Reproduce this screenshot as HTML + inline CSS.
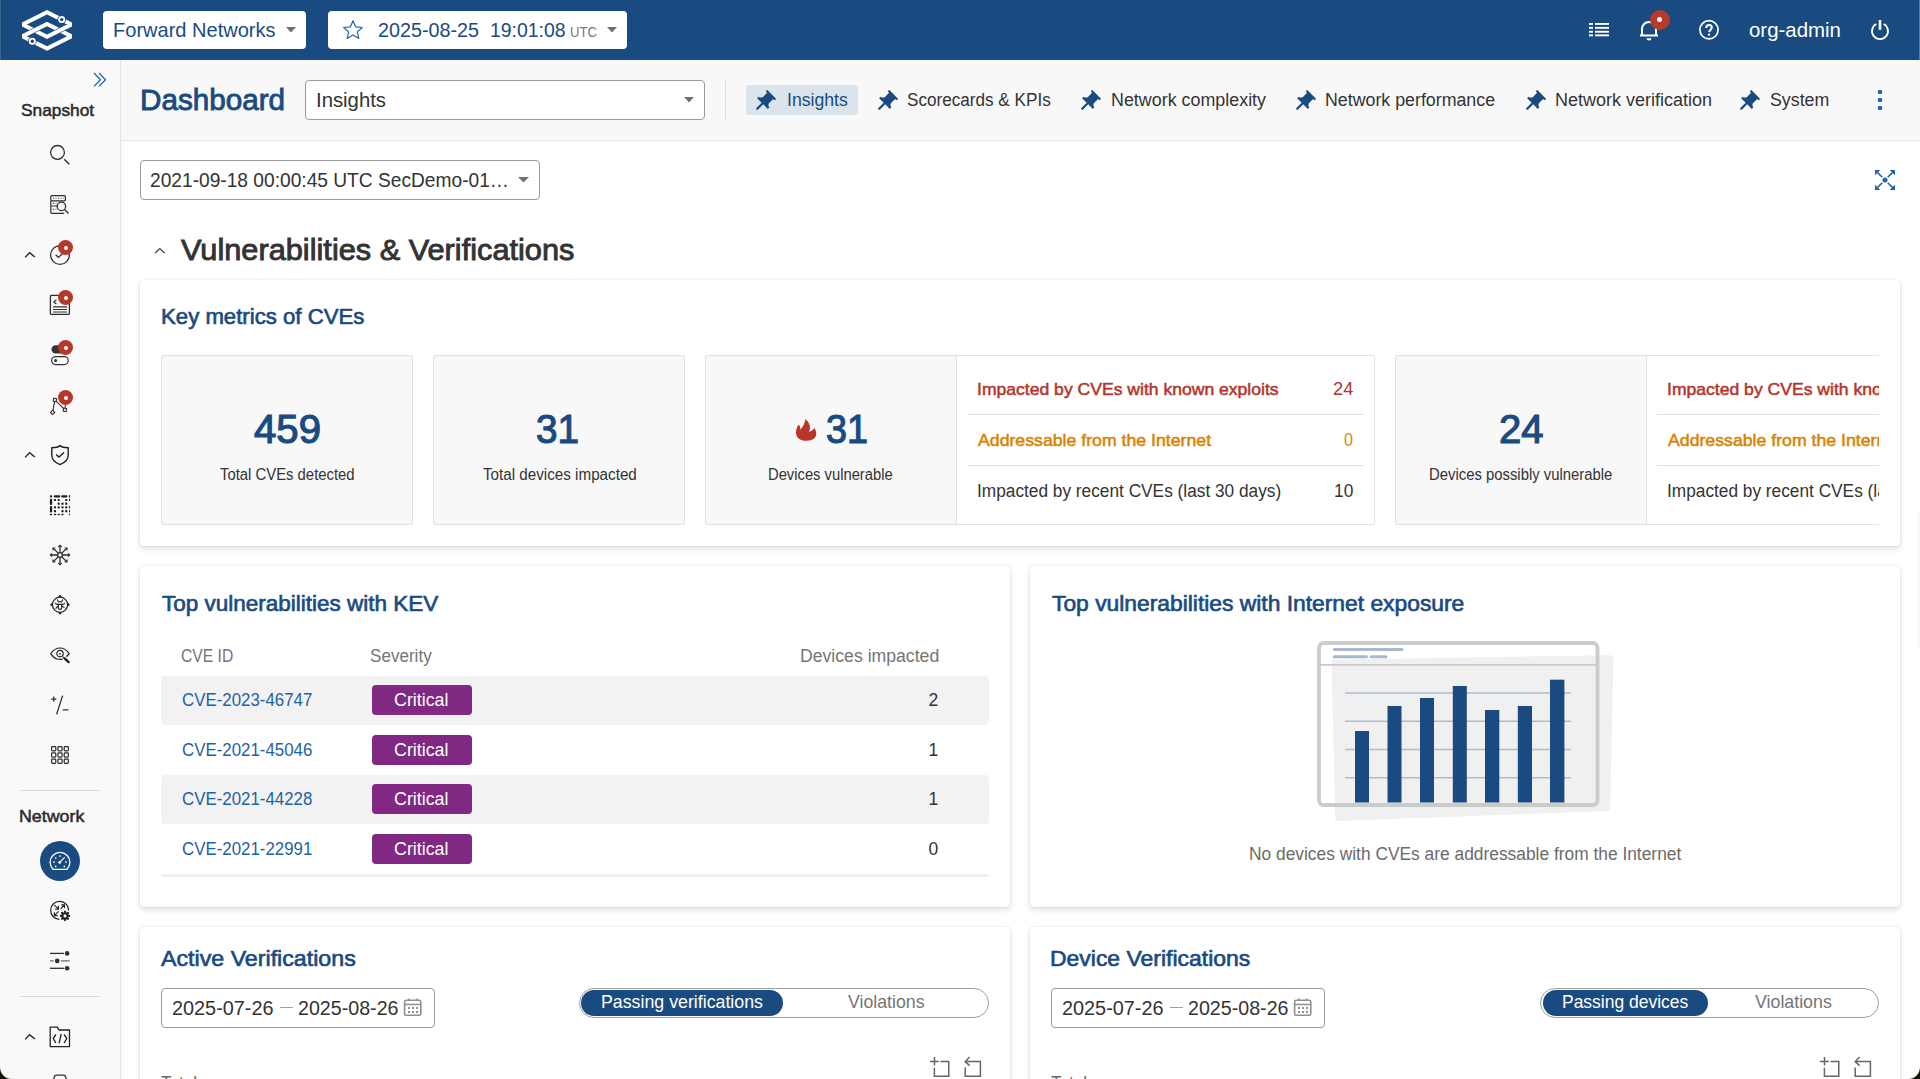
<!DOCTYPE html>
<html><head><meta charset="utf-8">
<style>
*{box-sizing:border-box;margin:0;padding:0}
html,body{width:1920px;height:1079px;overflow:hidden;background:#fff;font-family:"Liberation Sans",sans-serif}
.a{position:absolute}
.t{position:absolute;white-space:nowrap;line-height:1;transform-origin:0 0;font-family:"Liberation Sans",sans-serif}
svg{position:absolute;overflow:visible}
.card{position:absolute;background:#fff;border-radius:4px;box-shadow:0 0 1.5px rgba(0,0,0,.18),0 3px 6px rgba(0,0,0,.12)}
.mbox{position:absolute;background:#f8f8f8;border:1px solid #e2e2e2;border-radius:2px}
.badge{position:absolute;width:15px;height:15px;border-radius:50%;background:#b5382b}
.badge:after{content:"";position:absolute;left:5.5px;top:5.5px;width:4px;height:4px;border-radius:50%;background:#fff}
.row{position:absolute;left:161px;width:828px;height:49px;background:#f2f2f2;border-radius:4px}
.crit{position:absolute;left:372px;width:100px;height:30px;background:#812882;border-radius:4px}
</style></head><body>
<!-- top bar -->
<div class="a" style="left:0;top:0;width:1920px;height:60px;background:#1a4b80"></div>
<svg style="left:0;top:0" width="100" height="60" viewBox="0 0 100 60">
  <g fill="#fff" fill-rule="evenodd">
    <path d="M47 10 L72 22.5 L72 26.4 L47 38.9 L22 26.4 L22 22.5 Z M47 14.45 L67.05 24.5 L47 34.5 L26.95 24.5 Z"/>
    <path d="M47 21.8 L72 34.3 L72 38.2 L47 50.7 L22 38.2 L22 34.3 Z M47 26.25 L67.05 36.3 L47 46.3 L26.95 36.3 Z"/>
  </g>
  <!-- left crossing: ring2 over ring1 -->
  <g stroke="#1a4b80" stroke-width="1.3">
    <line x1="27" y1="31.8" x2="42" y2="24.3"/>
    <line x1="27" y1="36.25" x2="42" y2="28.75"/>
  </g>
  <path fill="#fff" d="M27 31.8 L42 24.3 L42 28.75 L27 36.25 Z"/>
  <!-- right crossing: ring1 over ring2 -->
  <g stroke="#1a4b80" stroke-width="1.3">
    <line x1="52" y1="32" x2="67" y2="24.5"/>
    <line x1="52" y1="36.4" x2="67" y2="28.9"/>
  </g>
  <path fill="#fff" d="M52 32 L67 24.5 L67 28.9 L52 36.4 Z"/>
  <circle cx="61.7" cy="19.6" r="4.3" fill="#1a4b80"/>
  <circle cx="61.7" cy="19.6" r="3.5" fill="#fff"/>
  <circle cx="61.7" cy="19.6" r="1.7" fill="#1a4b80"/>
  <circle cx="32.3" cy="41.2" r="4.3" fill="#1a4b80"/>
  <circle cx="32.3" cy="41.2" r="3.5" fill="#fff"/>
  <circle cx="32.3" cy="41.2" r="1.7" fill="#1a4b80"/>
</svg>
<div class="a" style="left:103px;top:11px;width:203px;height:38px;background:#fff;border-radius:4px"></div>
<svg style="left:286px;top:27px" width="10" height="6"><path d="M0 0 H10 L5 5.5 Z" fill="#707070"/></svg>
<div class="a" style="left:328px;top:11px;width:299px;height:38px;background:#fff;border-radius:4px"></div>
<svg style="left:342px;top:19px" width="22" height="22" viewBox="0 0 22 22"><path d="M11 1.8 L13.7 7.9 L20.3 8.5 L15.3 12.9 L16.8 19.4 L11 16 L5.2 19.4 L6.7 12.9 L1.7 8.5 L8.3 7.9 Z" fill="none" stroke="#1f64a8" stroke-width="1.2" stroke-linejoin="round"/></svg>
<svg style="left:607px;top:27px" width="10" height="6"><path d="M0 0 H10 L5 5.5 Z" fill="#707070"/></svg>
<!-- list icon -->
<svg style="left:1589px;top:22px" width="20" height="15" viewBox="0 0 20 15" fill="#fff">
  <rect x="0" y="1" width="4" height="1.9"/><rect x="6" y="1" width="14" height="1.9"/>
  <rect x="0" y="4.9" width="4" height="1.9"/><rect x="6" y="4.9" width="14" height="1.9"/>
  <rect x="0" y="8.8" width="4" height="1.9"/><rect x="6" y="8.8" width="14" height="1.9"/>
  <rect x="0" y="12.4" width="4" height="1.9"/><rect x="6" y="12.4" width="14" height="1.9"/>
</svg>
<!-- bell -->
<svg style="left:1638px;top:18px" width="22" height="24" viewBox="0 0 22 24">
  <path d="M4 17 V11 A7 7 0 0 1 18 11 V17" fill="none" stroke="#fff" stroke-width="2"/>
  <path d="M2 17.5 H20" stroke="#fff" stroke-width="2"/>
  <path d="M8.5 20.2 A2.5 2.2 0 0 0 13.5 20.2 Z" fill="#fff"/>
  <path d="M10 3.5 L12 3.5 L12 5 L10 5Z" fill="#fff"/>
</svg>
<div class="a" style="left:1650px;top:10px;width:20px;height:20px;border-radius:50%;background:#b83a2a"></div>
<div class="a" style="left:1657px;top:16.8px;width:5.4px;height:5.4px;border-radius:50%;background:#fff"></div>
<!-- help -->
<svg style="left:1698px;top:19px" width="22" height="22" viewBox="0 0 22 22">
  <circle cx="11" cy="10.8" r="9.1" fill="none" stroke="#fff" stroke-width="1.7"/>
  <path d="M8.2 8.9 C8.2 7 9.5 6.1 11.1 6.1 C12.7 6.1 13.8 7.1 13.8 8.5 C13.8 10.3 11.6 10.9 11.1 13" fill="none" stroke="#fff" stroke-width="2"/>
  <rect x="9.9" y="14.6" width="2.2" height="2" fill="#fff"/>
</svg>
<!-- power -->
<svg style="left:1870px;top:19px" width="20" height="22" viewBox="0 0 20 22">
  <rect x="8.7" y="1" width="2.6" height="9.8" fill="#fff"/>
  <path d="M6.3 5 A8 8 0 1 0 13.7 5" fill="none" stroke="#fff" stroke-width="1.8"/>
</svg>

<!-- sidebar -->
<div class="a" style="left:0;top:60px;width:121px;height:1019px;background:#f9f9f9;border-right:1px solid #e3e3e3"></div>
<div class="a" style="left:121px;top:60px;width:4px;height:1019px;background:linear-gradient(90deg,rgba(0,0,0,.035),rgba(0,0,0,0))"></div>
<!-- header band -->
<div class="a" style="left:121px;top:60px;width:1799px;height:81px;background:#f8f8f8;border-bottom:1px solid #e6e6e6"></div>

<!-- sidebar icons -->
<svg style="left:93px;top:72px" width="15" height="16" viewBox="0 0 15 16"><path d="M1 1 L7.5 7.7 L1 14.4 M6 1 L12.5 7.7 L6 14.4" fill="none" stroke="#1f66ad" stroke-width="1.3"/></svg>
<svg style="left:49px;top:144px" width="22" height="22" viewBox="0 0 22 22" fill="none" stroke="#2e2e2e" stroke-width="1.3"><circle cx="8.5" cy="8.4" r="6.9"/><path d="M15.2 15.2 L20.2 20.2" stroke-width="1.5"/></svg>
<svg style="left:49px;top:194px" width="22" height="22" viewBox="0 0 22 22" fill="none" stroke="#2e2e2e" stroke-width="1.2">
  <rect x="1.8" y="1.6" width="14.6" height="5.2" rx="1"/>
  <path d="M1.8 6.8 V12 H9 M1.8 12 V18.3 A1 1 0 0 0 2.8 19.3 H15.2"/>
  <path d="M4 4.2 H5 M6.6 4.2 H7.4 M9 4.2 H10 M11.6 4.2 H12.4 M14 4.2 H14.6 M3.8 9.2 H5.2 M6.6 9.2 H7.4 M3.8 15.3 H5.2 M6.6 15.3 H7.4" stroke-width="1.1"/>
  <circle cx="12.4" cy="12.4" r="4.2" stroke-width="1.3"/><path d="M15.5 15.5 L19.5 19.5" stroke-width="1.4"/>
</svg>
<svg style="left:24px;top:251px" width="12" height="8" viewBox="0 0 12 8"><path d="M1.2 6.4 L5.6 1.6 L10.8 6" fill="none" stroke="#222" stroke-width="1.4"/></svg>
<svg style="left:49px;top:244px" width="22" height="22" viewBox="0 0 22 22" fill="none" stroke="#2e2e2e" stroke-width="1.3"><circle cx="11" cy="11" r="9.4"/><path d="M6.6 10.8 L9.4 13.4 L13.6 9.6"/></svg>
<div class="badge" style="left:58px;top:240px"></div>
<svg style="left:49px;top:294px" width="22" height="22" viewBox="0 0 22 22" fill="none" stroke="#2e2e2e" stroke-width="1.3">
  <rect x="1.4" y="1.4" width="19" height="19" rx="1.2"/>
  <path d="M7.4 5.8 L4.8 7.9 L7.4 10" stroke-width="1.2"/>
  <path d="M4 12.8 H18 M4 15.5 H18 M4 18 H18" stroke-width="1.2"/>
</svg>
<div class="badge" style="left:58px;top:290px"></div>
<svg style="left:49px;top:344px" width="22" height="22" viewBox="0 0 22 22">
  <rect x="2.5" y="1.2" width="16" height="8.4" rx="4.2" fill="#333"/>
  <rect x="2.6" y="12.6" width="16.6" height="8" rx="4" fill="none" stroke="#333" stroke-width="1.2"/>
  <circle cx="6.6" cy="16.5" r="1.5" fill="#333"/>
</svg>
<div class="badge" style="left:58px;top:340px"></div>
<svg style="left:49px;top:394px" width="22" height="22" viewBox="0 0 22 22" fill="#fafafa" stroke="#2e2e2e" stroke-width="1.1">
  <path d="M3.6 18.4 L5.9 5.9 L15.9 15.8 L16.6 9.5" fill="none"/>
  <rect x="4.4" y="4.4" width="3" height="3" transform="rotate(10 5.9 5.9)"/>
  <rect x="14.4" y="14.3" width="3" height="3" transform="rotate(10 15.9 15.8)"/>
  <rect x="2.1" y="16.9" width="3" height="3" transform="rotate(40 3.6 18.4)"/>
</svg>
<div class="badge" style="left:58px;top:390px"></div>
<svg style="left:24px;top:451px" width="12" height="8" viewBox="0 0 12 8"><path d="M1.2 6.4 L5.6 1.6 L10.8 6" fill="none" stroke="#222" stroke-width="1.4"/></svg>
<svg style="left:49px;top:444px" width="22" height="22" viewBox="0 0 22 22" fill="none" stroke="#222" stroke-width="1.4">
  <path d="M11 1.6 C9.6 2.8 7.2 3.6 2.8 3.8 V11 C2.8 15.6 6.8 19 11 20.6 C15.2 19 19.2 15.6 19.2 11 V3.8 C14.8 3.6 12.4 2.8 11 1.6 Z"/>
  <path d="M7.2 10.6 L10 13 L15 8.4"/>
</svg>
<svg style="left:49px;top:494px" width="22" height="22" viewBox="0 0 22 22" fill="#1e1e1e"><rect x="0.90" y="1.20" width="2.20" height="2.20" rx="0.9"/><rect x="4.8" y="1.2" width="6.4" height="2.3" rx="1"/><rect x="12.2" y="1.2" width="6.2" height="2.3" rx="1"/><rect x="19.85" y="1.00" width="1.30" height="2.60" rx="0.9"/><rect x="0.9" y="4.7" width="2.3" height="6.3" rx="1"/><rect x="0.9" y="12" width="2.3" height="6.4" rx="1"/><rect x="4.90" y="4.90" width="2.20" height="2.20" rx="0.9"/><rect x="8.60" y="4.90" width="2.20" height="2.20" rx="0.9"/><rect x="16.10" y="4.90" width="2.20" height="2.20" rx="0.9"/><rect x="19.90" y="4.80" width="1.20" height="2.40" rx="0.9"/><rect x="8.60" y="8.60" width="2.20" height="2.20" rx="0.9"/><rect x="12.40" y="8.60" width="2.20" height="2.20" rx="0.9"/><rect x="16.10" y="8.60" width="2.20" height="2.20" rx="0.9"/><rect x="4.90" y="12.20" width="2.20" height="2.20" rx="0.9"/><rect x="8.60" y="12.20" width="2.20" height="2.20" rx="0.9"/><rect x="12.40" y="12.20" width="2.20" height="2.20" rx="0.9"/><rect x="16.10" y="12.20" width="2.20" height="2.20" rx="0.9"/><rect x="19.90" y="12.00" width="1.20" height="2.60" rx="0.9"/><rect x="4.90" y="16.10" width="2.20" height="2.20" rx="0.9"/><rect x="12.40" y="16.10" width="2.20" height="2.20" rx="0.9"/><rect x="16.10" y="16.10" width="2.20" height="2.20" rx="0.9"/><rect x="19.90" y="15.90" width="1.20" height="2.60" rx="0.9"/><rect x="0.80" y="19.80" width="2.40" height="1.40" rx="0.9"/><rect x="4.80" y="19.80" width="2.40" height="1.40" rx="0.9"/><rect x="8.50" y="19.80" width="2.40" height="1.40" rx="0.9"/><rect x="12.30" y="19.80" width="2.40" height="1.40" rx="0.9"/><rect x="19.80" y="19.80" width="1.40" height="1.40" rx="0.9"/></svg>
<svg style="left:49px;top:544px" width="22" height="22" viewBox="0 0 22 22" fill="none" stroke="#2e2e2e" stroke-width="1.3">
  <circle cx="11" cy="11" r="2.3"/>
  <path d="M11 8.7 V1.6 M11 13.3 V20.4 M8.7 11 H1.6 M13.3 11 H20.4 M9.4 9.4 L4.3 4.3 M12.6 12.6 L17.7 17.7 M12.6 9.4 L17.7 4.3 M9.4 12.6 L4.3 17.7"/>
  <path d="M9.4 3 L11 1.4 L12.6 3 M9.4 19 L11 20.6 L12.6 19 M3 9.4 L1.4 11 L3 12.6 M19 9.4 L20.6 11 L19 12.6 M4 6.4 V4 H6.4 M15.6 4 H18 V6.4 M4 15.6 V18 H6.4 M18 15.6 V18 H15.6" stroke-width="1.2"/>
</svg>
<svg style="left:49px;top:594px" width="22" height="22" viewBox="0 0 22 22" fill="none" stroke="#222" stroke-width="1.2">
  <circle cx="11" cy="10.7" r="7.6"/>
  <path d="M9.8 2.4 L11 1.2 L12.2 2.4 Z M9.8 19 L11 20.2 L12.2 19 Z M2.7 9.5 L1.5 10.7 L2.7 11.9 Z M19.3 9.5 L20.5 10.7 L19.3 11.9 Z" fill="#222" stroke-width="1"/>
  <path d="M8.2 5.5 L9.3 7.5 M13.8 5.5 L12.7 7.5 M9.3 8.3 Q11 6.7 12.7 8.3" stroke-width="1.1"/>
  <path d="M6.3 8.8 Q6.6 10.4 8.5 10.4 H13.5 Q15.3 10.4 15.7 8.8" stroke-width="1.1"/>
  <path d="M9.3 10.4 V13.4 Q9.3 15.4 11 15.4 Q12.7 15.4 12.7 13.4 V10.4" stroke-width="1.1"/>
  <path d="M9.2 12 L6.6 14.6 M12.8 12 L15.5 13.6" stroke-width="1.1"/>
</svg>
<svg style="left:49px;top:644px" width="22" height="22" viewBox="0 0 22 22" fill="none" stroke="#222" stroke-width="1.2">
  <path d="M1.6 9.6 C4.5 5.8 7.6 4 11 4 C14.4 4 17.5 5.8 20.2 9.6 C19.3 10.8 18.4 11.8 17.4 12.7"/>
  <path d="M1.6 9.6 C3.8 12.8 5.8 14.4 8 15 C9.8 15.5 11.8 15.6 13.5 15.2"/>
  <circle cx="11" cy="9.6" r="3.2"/><circle cx="10.9" cy="9.8" r="0.9" fill="#222" stroke="none"/>
  <path d="M13.6 12.6 L15.8 14.6"/><path d="M15.6 14.4 L19.6 18.1" stroke-width="2.4" stroke-linecap="round"/>
</svg>
<svg style="left:49px;top:694px" width="22" height="22" viewBox="0 0 22 22" fill="none" stroke="#2e2e2e" stroke-width="1.3">
  <path d="M2.2 5.2 H7.4 M4.8 2.6 V7.8 M13.6 1.6 L7.6 20.4 M13.8 15.8 H19.4"/>
</svg>
<svg style="left:49px;top:744px" width="22" height="22" viewBox="0 0 22 22" fill="none" stroke="#2e2e2e" stroke-width="1.2">
  <rect x="2.6" y="2.6" width="4.2" height="4.2" rx=".8"/><rect x="8.9" y="2.6" width="4.2" height="4.2" rx=".8"/><rect x="15.2" y="2.6" width="4.2" height="4.2" rx=".8"/>
  <rect x="2.6" y="8.9" width="4.2" height="4.2" rx=".8"/><rect x="8.9" y="8.9" width="4.2" height="4.2" rx=".8"/><rect x="15.2" y="8.9" width="4.2" height="4.2" rx=".8"/>
  <rect x="2.6" y="15.2" width="4.2" height="4.2" rx=".8"/><rect x="8.9" y="15.2" width="4.2" height="4.2" rx=".8"/><rect x="15.2" y="15.2" width="4.2" height="4.2" rx=".8"/>
</svg>
<div class="a" style="left:20px;top:790px;width:80px;height:1px;background:#dcdcdc"></div>
<div class="a" style="left:40px;top:841px;width:40px;height:40px;border-radius:50%;background:#1a4b80"></div>
<svg style="left:49px;top:850px" width="22" height="22" viewBox="0 0 22 22" fill="none" stroke="#fff" stroke-width="1.3">
  <path d="M4 19.3 A9.9 9.9 0 1 1 18 19.3 Z" stroke-linejoin="round"/>
  <path d="M10.7 12.4 L15.7 7.4" stroke-width="1.2"/><circle cx="10.7" cy="12.4" r="1.4" fill="#fff" stroke="none"/>
  <g fill="#fff" stroke="none"><circle cx="11" cy="6" r="0.85"/><circle cx="6.7" cy="8" r="0.85"/><circle cx="4.9" cy="12.1" r="0.85"/><circle cx="6.7" cy="16.4" r="0.85"/><circle cx="17" cy="12.1" r="0.85"/><circle cx="15.4" cy="16.4" r="0.85"/></g>
</svg>
<svg style="left:49px;top:900px" width="22" height="22" viewBox="0 0 22 22" fill="none" stroke="#222" stroke-width="1.2">
  <path d="M10.4 19.3 A9 9 0 1 1 19.6 10.6"/>
  <path d="M5.2 4.9 L9.2 8.9 M9.4 5.8 V9.2 H6 M11.5 8.9 L15.4 5 M12.3 4.9 H15.5 V8.1 M9.6 11.4 L5.6 15.4 M5.4 12.3 V15.6 H8.6" stroke-width="1.15"/>
  <circle cx="16" cy="15.9" r="4.6" fill="#f9f9f9" stroke="none"/>
  <g fill="#222" stroke="none"><circle cx="20.10" cy="15.90" r="1.15"/><circle cx="18.90" cy="18.80" r="1.15"/><circle cx="16.00" cy="20.00" r="1.15"/><circle cx="13.10" cy="18.80" r="1.15"/><circle cx="11.90" cy="15.90" r="1.15"/><circle cx="13.10" cy="13.00" r="1.15"/><circle cx="16.00" cy="11.80" r="1.15"/><circle cx="18.90" cy="13.00" r="1.15"/></g>
  <circle cx="16" cy="15.9" r="2.6" stroke-width="2.1"/>
</svg>
<svg style="left:49px;top:950px" width="22" height="22" viewBox="0 0 22 22" fill="#2e2e2e" stroke="#2e2e2e" stroke-width="1.3">
  <path d="M1 3.4 H15" fill="none"/><circle cx="18.1" cy="3.4" r="2.3" stroke="none"/>
  <path d="M1 10.9 H4.6 M11.8 10.9 H20.6" fill="none" stroke="#6a6a6a"/><circle cx="8.2" cy="10.9" r="2.3" stroke="none"/>
  <path d="M1 18.3 H15" fill="none"/><circle cx="18.1" cy="18.3" r="2.3" stroke="none"/>
</svg>
<div class="a" style="left:20px;top:996px;width:80px;height:1px;background:#dcdcdc"></div>
<svg style="left:24px;top:1033px" width="12" height="8" viewBox="0 0 12 8"><path d="M1.2 6.4 L5.6 1.6 L10.8 6" fill="none" stroke="#222" stroke-width="1.4"/></svg>
<svg style="left:49px;top:1026px" width="22" height="22" viewBox="0 0 22 22" fill="none" stroke="#222" stroke-width="1.3">
  <path d="M1.2 20.6 V1.1 H8.4 L9.9 4 H20.5 V20.6 Z" stroke-linejoin="round"/>
  <path d="M6.9 8.4 L4.2 12.6 L6.9 16.8 M15.1 8.4 L17.8 12.6 L15.1 16.8 M12.2 8 L10.1 17.4"/>
</svg>
<svg style="left:49px;top:1074px" width="22" height="10" viewBox="0 0 22 10"><path d="M5 8 V4 A3 3 0 0 1 8 1.2 H14 A3 3 0 0 1 17 4 V8" fill="none" stroke="#333" stroke-width="1.3"/></svg>

<!-- header -->
<div class="a" style="left:305px;top:80px;width:400px;height:40px;background:#fff;border:1px solid #9a9a9a;border-radius:4px"></div>
<svg style="left:684px;top:97px" width="10" height="6"><path d="M0 0 H10 L5 5.5 Z" fill="#707070"/></svg>
<div class="a" style="left:725px;top:80px;width:1px;height:40px;background:#dedede"></div>
<div class="a" style="left:746px;top:85px;width:112px;height:30px;background:#dbe3ed;border-radius:4px"></div>
<svg style="left:750.7px;top:89.2px" width="26" height="26" viewBox="0 0 24 24"><path transform="rotate(45 12 12)" d="M16 9V4h1c.55 0 1-.45 1-1s-.45-1-1-1H7c-.55 0-1 .45-1 1s.45 1 1 1h1v5c0 1.66-1.34 3-3 3v2h5.97v7l1 1 1-1v-7H19v-2c-1.66 0-3-1.34-3-3z" fill="#1a4b80"/></svg>
<svg style="left:872.7px;top:89.2px" width="26" height="26" viewBox="0 0 24 24"><path transform="rotate(45 12 12)" d="M16 9V4h1c.55 0 1-.45 1-1s-.45-1-1-1H7c-.55 0-1 .45-1 1s.45 1 1 1h1v5c0 1.66-1.34 3-3 3v2h5.97v7l1 1 1-1v-7H19v-2c-1.66 0-3-1.34-3-3z" fill="#1a4b80"/></svg>
<svg style="left:1076.4px;top:89.2px" width="26" height="26" viewBox="0 0 24 24"><path transform="rotate(45 12 12)" d="M16 9V4h1c.55 0 1-.45 1-1s-.45-1-1-1H7c-.55 0-1 .45-1 1s.45 1 1 1h1v5c0 1.66-1.34 3-3 3v2h5.97v7l1 1 1-1v-7H19v-2c-1.66 0-3-1.34-3-3z" fill="#1a4b80"/></svg>
<svg style="left:1290.7px;top:89.2px" width="26" height="26" viewBox="0 0 24 24"><path transform="rotate(45 12 12)" d="M16 9V4h1c.55 0 1-.45 1-1s-.45-1-1-1H7c-.55 0-1 .45-1 1s.45 1 1 1h1v5c0 1.66-1.34 3-3 3v2h5.97v7l1 1 1-1v-7H19v-2c-1.66 0-3-1.34-3-3z" fill="#1a4b80"/></svg>
<svg style="left:1520.7px;top:89.2px" width="26" height="26" viewBox="0 0 24 24"><path transform="rotate(45 12 12)" d="M16 9V4h1c.55 0 1-.45 1-1s-.45-1-1-1H7c-.55 0-1 .45-1 1s.45 1 1 1h1v5c0 1.66-1.34 3-3 3v2h5.97v7l1 1 1-1v-7H19v-2c-1.66 0-3-1.34-3-3z" fill="#1a4b80"/></svg>
<svg style="left:1735.4px;top:89.2px" width="26" height="26" viewBox="0 0 24 24"><path transform="rotate(45 12 12)" d="M16 9V4h1c.55 0 1-.45 1-1s-.45-1-1-1H7c-.55 0-1 .45-1 1s.45 1 1 1h1v5c0 1.66-1.34 3-3 3v2h5.97v7l1 1 1-1v-7H19v-2c-1.66 0-3-1.34-3-3z" fill="#1a4b80"/></svg>

<svg style="left:1872px;top:89px" width="16" height="22" viewBox="0 0 16 22" fill="#1f64a8"><circle cx="8" cy="3" r="2.3"/><circle cx="8" cy="11" r="2.3"/><circle cx="8" cy="19" r="2.3"/></svg>

<!-- snapshot select -->
<div class="a" style="left:140px;top:160px;width:400px;height:40px;background:#fff;border:1px solid #9a9a9a;border-radius:4px"></div>
<svg style="left:518px;top:177px" width="11" height="6"><path d="M0 0 H11 L5.5 5.5 Z" fill="#707070"/></svg>
<svg style="left:1875px;top:170px" width="20" height="20" viewBox="0 0 20 20" fill="#1f62a6">
  <path d="M2.6 2.6 L7.3 7.3 M17.4 2.6 L12.7 7.3 M2.6 17.4 L7.3 12.7 M17.4 17.4 L12.7 12.7" stroke="#1f62a6" stroke-width="1.5"/>
  <path d="M0 0.6 Q0 0 0.6 0 H5.3 L0 5.3Z M20 0.6 Q20 0 19.4 0 H14.7 L20 5.3Z M0 19.4 Q0 20 0.6 20 H5.3 L0 14.7Z M20 19.4 Q20 20 19.4 20 H14.7 L20 14.7Z"/>
  <circle cx="10" cy="10" r="2.5"/>
</svg>
<svg style="left:153px;top:245px" width="14" height="10" viewBox="0 0 14 10"><path d="M2.2 8 L6.8 3.6 L11.6 8" fill="none" stroke="#444" stroke-width="1.3"/></svg>

<!-- key metrics card -->
<div class="card" style="left:140px;top:280px;width:1760px;height:266px"></div>
<div class="mbox" style="left:161px;top:355px;width:252px;height:170px"></div>
<div class="mbox" style="left:433px;top:355px;width:252px;height:170px"></div>
<div class="a" style="left:705px;top:355px;width:670px;height:170px;border:1px solid #e2e2e2;border-radius:2px;background:#fff"></div>
<div class="a" style="left:706px;top:356px;width:251px;height:168px;background:#f8f8f8;border-right:1px solid #e2e2e2"></div>
<div class="a" style="left:967px;top:414px;width:397px;height:1px;background:#e0e0e0"></div>
<div class="a" style="left:967px;top:465px;width:397px;height:1px;background:#e0e0e0"></div>
<svg style="left:788px;top:412px" width="36" height="36" viewBox="0 0 36 36"><path d="M17.35 7 C19.8 9.2 22.2 12.2 22 15.8 C21.9 17.6 21.5 18.7 21.1 19.7 C23.3 19.2 25.3 17.6 26.5 16 C28.4 19 29 23 27 25.6 C25 28.2 21.3 29 17.5 28.8 C13 28.6 8.6 26.4 8 21.4 C7.7 18.2 8.8 15.2 10.5 12.7 C12.1 13.5 12.3 15.6 12.3 17.7 C14.8 15.2 17 11.2 17.35 7 Z" fill="#b93628"/></svg>
<div class="a" style="left:1395px;top:355px;width:484px;height:170px;border:1px solid #e2e2e2;border-right:none;border-radius:2px 0 0 2px;background:#fff;overflow:hidden"></div>
<div class="a" style="left:1396px;top:356px;width:251px;height:168px;background:#f8f8f8;border-right:1px solid #e2e2e2"></div>
<div class="a" style="left:1657px;top:414px;width:222px;height:1px;background:#e0e0e0"></div>
<div class="a" style="left:1657px;top:465px;width:222px;height:1px;background:#e0e0e0"></div>

<!-- KEV card -->
<div class="card" style="left:140px;top:566px;width:870px;height:341px"></div>
<div class="row" style="top:676px"></div>
<div class="row" style="top:775px"></div>
<div class="a" style="left:161px;top:874px;width:828px;height:3px;background:#f0f0f0;border-radius:4px 4px 0 0"></div>
<div class="crit" style="top:685px"></div>
<div class="crit" style="top:735px"></div>
<div class="crit" style="top:784px"></div>
<div class="crit" style="top:834px"></div>

<!-- internet card -->
<div class="card" style="left:1030px;top:566px;width:870px;height:341px"></div>
<svg style="left:1300px;top:630px" width="330" height="200" viewBox="0 0 330 200">
  <path d="M31.5 29.7 L310 25.2 Q313.5 25.1 313.4 28.6 L310.2 178 Q310 181 306.5 181.1 L38.5 191 Q35.4 191.1 35.3 188 Z" fill="#f0f0f0"/>
  <rect x="19" y="13" width="278.5" height="162" rx="5" fill="none" stroke="#cbcbcb" stroke-width="3.8"/>
  <path d="M20 34.8 H296" stroke="#c9c9c9" stroke-width="1.8"/>
  <path d="M34.3 19.5 H102" stroke="#a9b9cc" stroke-width="3" stroke-linecap="round"/>
  <path d="M34.3 26.8 H66.5 M71 26.8 H86" stroke="#a9b9cc" stroke-width="3" stroke-linecap="round"/>
  <path d="M45 63 H271 M45 91.2 H271 M45 119.5 H271 M45 147.8 H271" stroke="#a9bdd3" stroke-width="1.6"/>
  <g fill="#194b80">
    <rect x="55" y="101" width="14" height="71.5"/>
    <rect x="87.5" y="76" width="14" height="96.5"/>
    <rect x="120" y="68" width="14" height="104.5"/>
    <rect x="152.8" y="56" width="14" height="116.5"/>
    <rect x="185" y="80" width="14.3" height="92.5"/>
    <rect x="217.8" y="76" width="14.2" height="96.5"/>
    <rect x="250" y="49.7" width="14.4" height="122.8"/>
  </g>
</svg>

<!-- active verifications card -->
<div class="card" style="left:140px;top:927px;width:870px;height:200px"></div>
<div class="a" style="left:161px;top:988px;width:274px;height:40px;border:1px solid #9a9a9a;border-radius:4px;background:#fff"></div>
<svg style="left:403px;top:997px" width="20" height="20" viewBox="0 0 20 20" fill="none" stroke="#8f8f8f" stroke-width="1.6">
  <rect x="1.6" y="3.3" width="16.2" height="15" rx="1.6"/><path d="M1.6 7.5 H17.8 M5.8 1.4 V3.8 M13.6 1.4 V3.8"/>
  <g fill="#8f8f8f" stroke="none"><rect x="5" y="10" width="2" height="2"/><rect x="9" y="10" width="2" height="2"/><rect x="13" y="10" width="2" height="2"/><rect x="5" y="14" width="2" height="2"/><rect x="9" y="14" width="2" height="2"/><rect x="13" y="14" width="2" height="2"/></g>
</svg>
<div class="a" style="left:279.5px;top:1007px;width:13px;height:1.4px;background:#9e9e9e"></div>
<div class="a" style="left:579px;top:988px;width:410px;height:30px;border:1px solid #9e9e9e;border-radius:15px;background:#fff"></div>
<div class="a" style="left:580.5px;top:990px;width:202.5px;height:25.5px;border-radius:13px;background:#1a4b80"></div>
<svg style="left:928px;top:1055px" width="60" height="24" viewBox="0 0 60 24" fill="none" stroke="#666" stroke-width="1.5">
  <path d="M6.5 2 V10.6 M2 6.6 H10.8 M12.4 6.6 H20.75 V21.2 H6.4 V12.8"/>
  <path d="M41.6 2 L37.2 6.6 L41.6 10.6 M37.2 6.6 H52.4 V21.2 H37.2 V12.5"/>
</svg>

<!-- device verifications card -->
<div class="card" style="left:1030px;top:927px;width:870px;height:200px"></div>
<div class="a" style="left:1051px;top:988px;width:274px;height:40px;border:1px solid #9a9a9a;border-radius:4px;background:#fff"></div>
<svg style="left:1293px;top:997px" width="20" height="20" viewBox="0 0 20 20" fill="none" stroke="#8f8f8f" stroke-width="1.6">
  <rect x="1.6" y="3.3" width="16.2" height="15" rx="1.6"/><path d="M1.6 7.5 H17.8 M5.8 1.4 V3.8 M13.6 1.4 V3.8"/>
  <g fill="#8f8f8f" stroke="none"><rect x="5" y="10" width="2" height="2"/><rect x="9" y="10" width="2" height="2"/><rect x="13" y="10" width="2" height="2"/><rect x="5" y="14" width="2" height="2"/><rect x="9" y="14" width="2" height="2"/><rect x="13" y="14" width="2" height="2"/></g>
</svg>
<div class="a" style="left:1169.5px;top:1007px;width:13px;height:1.4px;background:#9e9e9e"></div>
<div class="a" style="left:1540px;top:988px;width:339px;height:30px;border:1px solid #9e9e9e;border-radius:15px;background:#fff"></div>
<div class="a" style="left:1542.5px;top:990px;width:165.5px;height:25.5px;border-radius:13px;background:#1a4b80"></div>
<svg style="left:1818px;top:1055px" width="60" height="24" viewBox="0 0 60 24" fill="none" stroke="#666" stroke-width="1.5">
  <path d="M6.5 2 V10.6 M2 6.6 H10.8 M12.4 6.6 H20.75 V21.2 H6.4 V12.8"/>
  <path d="M41.6 2 L37.2 6.6 L41.6 10.6 M37.2 6.6 H52.4 V21.2 H37.2 V12.5"/>
</svg>

<div class="a" style="left:1917px;top:510px;width:3px;height:140px;background:linear-gradient(90deg,rgba(0,0,0,0),rgba(0,0,0,.04))"></div>
<!-- window corners -->
<svg style="left:0;top:1067px" width="12" height="12" viewBox="0 0 12 12"><path d="M0 0 A11.5 12 0 0 0 11.5 12 H0 Z" fill="#15140c"/></svg>
<svg style="left:1908px;top:1067px" width="12" height="12" viewBox="0 0 12 12"><path d="M12 0 A11.5 12 0 0 1 0.5 12 H12 Z" fill="#15140c"/></svg>
<div class="a" style="left:1919px;top:0;width:1px;height:60px;background:#5a7ca3"></div>
<div class="a" style="left:0;top:0;width:1px;height:60px;background:#3e6590"></div>

<span class="t" style="left:112.80px;top:19.10px;font-size:21px;color:#1a4b80;transform:scaleX(0.9541);">Forward Networks</span>
<span class="t" style="left:377.74px;top:19.70px;font-size:20.5px;color:#1a4b80;transform:scaleX(0.9641);">2025-08-25</span>
<span class="t" style="left:489.85px;top:19.70px;font-size:20.5px;color:#1a4b80;transform:scaleX(0.9474);">19:01:08</span>
<span class="t" style="left:569.87px;top:24.70px;font-size:14px;color:#777777;transform:scaleX(0.9333);">UTC</span>
<span class="t" style="left:1749.03px;top:18.60px;font-size:21px;color:#ffffff;transform:scaleX(0.9728);">org-admin</span>
<span class="t" style="left:139.72px;top:84.90px;font-size:30px;color:#1a4b80;-webkit-text-stroke:0.90px #1a4b80;transform:scaleX(0.9882);">Dashboard</span>
<span class="t" style="left:315.97px;top:89.80px;font-size:20px;color:#333333;transform:scaleX(1.0149);">Insights</span>
<span class="t" style="left:786.62px;top:90.90px;font-size:18px;color:#1a4b80;transform:scaleX(0.9803);">Insights</span>
<span class="t" style="left:907.05px;top:90.90px;font-size:18px;color:#333333;transform:scaleX(0.9513);">Scorecards &amp; KPIs</span>
<span class="t" style="left:1110.71px;top:90.90px;font-size:18px;color:#333333;transform:scaleX(0.9935);">Network complexity</span>
<span class="t" style="left:1325.01px;top:90.90px;font-size:18px;color:#333333;transform:scaleX(0.9883);">Network performance</span>
<span class="t" style="left:1555.00px;top:90.90px;font-size:18px;color:#333333;">Network verification</span>
<span class="t" style="left:1770.01px;top:90.90px;font-size:18px;color:#333333;transform:scaleX(0.9879);">System</span>
<span class="t" style="left:150.49px;top:169.40px;font-size:21px;color:#333333;transform:scaleX(0.9126);">2021-09-18 00:00:45 UTC SecDemo-01…</span>
<span class="t" style="left:181.30px;top:235.20px;font-size:29.5px;color:#333333;-webkit-text-stroke:0.89px #333333;transform:scaleX(1.0416);">Vulnerabilities &amp; Verifications</span>
<span class="t" style="left:160.68px;top:305.80px;font-size:21.7px;color:#1a4b80;-webkit-text-stroke:0.65px #1a4b80;transform:scaleX(1.0227);">Key metrics of CVEs</span>
<span class="t" style="left:253.80px;top:409.30px;font-size:41px;color:#1a4b80;-webkit-text-stroke:1.23px #1a4b80;transform:scaleX(0.9791);">459</span>
<span class="t" style="left:536.26px;top:409.30px;font-size:41px;color:#1a4b80;-webkit-text-stroke:1.23px #1a4b80;transform:scaleX(0.9432);">31</span>
<span class="t" style="left:825.58px;top:409.30px;font-size:41px;color:#1a4b80;-webkit-text-stroke:1.23px #1a4b80;transform:scaleX(0.9205);">31</span>
<span class="t" style="left:1498.52px;top:409.30px;font-size:41px;color:#1a4b80;-webkit-text-stroke:1.23px #1a4b80;transform:scaleX(0.9773);">24</span>
<span class="t" style="left:220.30px;top:466.90px;font-size:16px;color:#333333;transform:scaleX(0.9285);">Total CVEs detected</span>
<span class="t" style="left:482.50px;top:466.90px;font-size:16px;color:#333333;transform:scaleX(0.9503);">Total devices impacted</span>
<span class="t" style="left:768.48px;top:466.90px;font-size:16px;color:#333333;transform:scaleX(0.9224);">Devices vulnerable</span>
<span class="t" style="left:1429.07px;top:466.90px;font-size:16px;color:#333333;transform:scaleX(0.9286);">Devices possibly vulnerable</span>
<span class="t" style="left:976.87px;top:380.90px;font-size:17px;color:#b5352a;-webkit-text-stroke:0.51px #b5352a;transform:scaleX(1.0330);">Impacted by CVEs with known exploits</span>
<span class="t" style="left:1332.98px;top:379.90px;font-size:18px;color:#b5352a;transform:scaleX(1.0158);">24</span>
<span class="t" style="left:977.50px;top:431.90px;font-size:17px;color:#d98300;-webkit-text-stroke:0.51px #d98300;transform:scaleX(1.0406);">Addressable from the Internet</span>
<span class="t" style="left:1344.30px;top:430.90px;font-size:18px;color:#d98300;transform:scaleX(0.9000);">0</span>
<span class="t" style="left:976.94px;top:481.90px;font-size:18px;color:#333333;transform:scaleX(0.9592);">Impacted by recent CVEs (last 30 days)</span>
<span class="t" style="left:1334.04px;top:481.90px;font-size:18px;color:#333333;transform:scaleX(0.9632);">10</span>
<div class="a" style="left:1657px;top:354.9px;width:221.6px;height:60px;overflow:hidden"><span class="t" style="left:9.87px;top:26.00px;font-size:17px;color:#b5352a;-webkit-text-stroke:0.51px #b5352a;transform:scaleX(1.0330)">Impacted by CVEs with known exploits</span></div>
<div class="a" style="left:1657px;top:405.9px;width:221.6px;height:60px;overflow:hidden"><span class="t" style="left:10.50px;top:26.00px;font-size:17px;color:#d98300;-webkit-text-stroke:0.51px #d98300;transform:scaleX(1.0406)">Addressable from the Internet</span></div>
<div class="a" style="left:1657px;top:456.9px;width:221.6px;height:60px;overflow:hidden"><span class="t" style="left:9.94px;top:25.00px;font-size:18px;color:#333333;transform:scaleX(0.9592)">Impacted by recent CVEs (last 30 days)</span></div>
<span class="t" style="left:161.50px;top:593.00px;font-size:21.7px;color:#1a4b80;-webkit-text-stroke:0.65px #1a4b80;transform:scaleX(1.0367);">Top vulnerabilities with KEV</span>
<span class="t" style="left:1051.50px;top:593.00px;font-size:21.7px;color:#1a4b80;-webkit-text-stroke:0.65px #1a4b80;transform:scaleX(1.0523);">Top vulnerabilities with Internet exposure</span>
<span class="t" style="left:180.83px;top:647.20px;font-size:18px;color:#757575;transform:scaleX(0.8712);">CVE ID</span>
<span class="t" style="left:370.35px;top:647.20px;font-size:18px;color:#757575;transform:scaleX(0.9484);">Severity</span>
<span class="t" style="left:800.32px;top:647.20px;font-size:18px;color:#757575;transform:scaleX(0.9800);">Devices impacted</span>
<span class="t" style="left:181.54px;top:691.80px;font-size:17.5px;color:#1f62a3;transform:scaleX(0.9642);">CVE-2023-46747</span>
<span class="t" style="left:394.28px;top:691.80px;font-size:17.5px;color:#ffffff;transform:scaleX(1.0192);">Critical</span>
<span class="t" style="left:928.60px;top:691.80px;font-size:17.5px;color:#333333;">2</span>
<span class="t" style="left:181.54px;top:741.60px;font-size:17.5px;color:#1f62a3;transform:scaleX(0.9642);">CVE-2021-45046</span>
<span class="t" style="left:394.28px;top:741.60px;font-size:17.5px;color:#ffffff;transform:scaleX(1.0192);">Critical</span>
<span class="t" style="left:928.60px;top:741.60px;font-size:17.5px;color:#333333;">1</span>
<span class="t" style="left:181.54px;top:791.30px;font-size:17.5px;color:#1f62a3;transform:scaleX(0.9642);">CVE-2021-44228</span>
<span class="t" style="left:394.28px;top:791.30px;font-size:17.5px;color:#ffffff;transform:scaleX(1.0192);">Critical</span>
<span class="t" style="left:928.60px;top:791.30px;font-size:17.5px;color:#333333;">1</span>
<span class="t" style="left:181.54px;top:841.00px;font-size:17.5px;color:#1f62a3;transform:scaleX(0.9642);">CVE-2021-22991</span>
<span class="t" style="left:394.28px;top:841.00px;font-size:17.5px;color:#ffffff;transform:scaleX(1.0192);">Critical</span>
<span class="t" style="left:928.60px;top:841.00px;font-size:17.5px;color:#333333;">0</span>
<span class="t" style="left:1248.54px;top:845.00px;font-size:18px;color:#6b6b6b;transform:scaleX(0.9644);">No devices with CVEs are addressable from the Internet</span>
<span class="t" style="left:161.25px;top:948.25px;font-size:21.7px;color:#1a4b80;-webkit-text-stroke:0.65px #1a4b80;transform:scaleX(1.0701);">Active Verifications</span>
<span class="t" style="left:1050.44px;top:948.25px;font-size:21.7px;color:#1a4b80;-webkit-text-stroke:0.65px #1a4b80;transform:scaleX(1.0580);">Device Verifications</span>
<span class="t" style="left:171.53px;top:998.00px;font-size:20.5px;color:#333333;transform:scaleX(0.9684);">2025-07-26</span>
<span class="t" style="left:298.44px;top:998.00px;font-size:20.5px;color:#333333;transform:scaleX(0.9583);">2025-08-26</span>
<span class="t" style="left:161.20px;top:1074.40px;font-size:18px;color:#666666;transform:scaleX(0.9500);">Total</span>
<span class="t" style="left:1061.53px;top:998.00px;font-size:20.5px;color:#333333;transform:scaleX(0.9684);">2025-07-26</span>
<span class="t" style="left:1188.44px;top:998.00px;font-size:20.5px;color:#333333;transform:scaleX(0.9583);">2025-08-26</span>
<span class="t" style="left:1051.20px;top:1074.40px;font-size:18px;color:#666666;transform:scaleX(0.9500);">Total</span>
<span class="t" style="left:600.84px;top:993.00px;font-size:18.5px;color:#ffffff;transform:scaleX(0.9605);">Passing verifications</span>
<span class="t" style="left:847.70px;top:993.00px;font-size:18.5px;color:#757575;transform:scaleX(0.9575);">Violations</span>
<span class="t" style="left:1562.06px;top:993.00px;font-size:18.5px;color:#ffffff;transform:scaleX(0.9439);">Passing devices</span>
<span class="t" style="left:1755.30px;top:993.00px;font-size:18.5px;color:#757575;transform:scaleX(0.9613);">Violations</span>
<span class="t" style="left:20.60px;top:101.70px;font-size:17px;color:#2b2b2b;-webkit-text-stroke:0.51px #2b2b2b;transform:scaleX(1.0187);">Snapshot</span>
<span class="t" style="left:19.25px;top:808.40px;font-size:17px;color:#2b2b2b;-webkit-text-stroke:0.51px #2b2b2b;transform:scaleX(1.0484);">Network</span>
</body></html>
